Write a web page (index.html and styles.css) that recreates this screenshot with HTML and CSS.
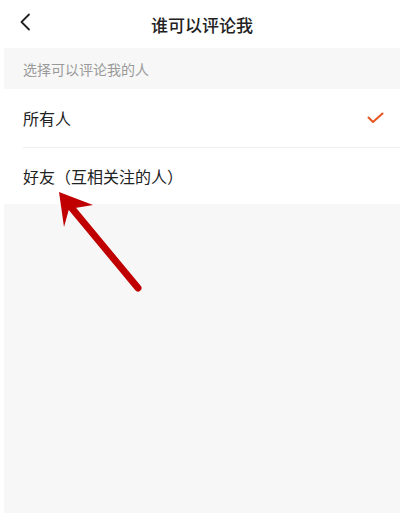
FILE: index.html
```html
<!DOCTYPE html>
<html lang="zh-CN">
<head>
<meta charset="utf-8">
<link rel="stylesheet" href="styles.css">
</head>
<body>
<div class="page">
  <header class="topbar">
    <svg class="back" width="12" height="18" viewBox="0 0 12 18"><path d="M10 1.5 L2.5 9 L10 16.5" fill="none" stroke="#222" stroke-width="1.8" stroke-linecap="round" stroke-linejoin="round"/></svg>
    <h1 class="title">谁可以评论我</h1>
  </header>
  <div class="section-label">选择可以评论我的人</div>
  <ul class="options">
    <li class="option option-first">
      <span>所有人</span>
      <svg class="check" width="17" height="12" viewBox="0 0 17 12"><path d="M1.5 5.5 L6 10 L15.5 1.5" fill="none" stroke="#e8541e" stroke-width="2" stroke-linecap="round" stroke-linejoin="round"/></svg>
    </li>
    <li class="option option-second"><span>好友（互相关注的人）</span></li>
  </ul>
  <div class="filler"></div>
</div>
<svg class="arrow" width="403" height="514" viewBox="0 0 403 514">
  <line x1="138" y1="288" x2="70" y2="206" stroke="#c00000" stroke-width="7" stroke-linecap="round"/>
  <polygon points="59,192 93,205 69,209 64,227" fill="#c00000"/>
</svg>
</body>
</html>
```
FILE: styles.css
```css
html, body {
  margin: 0;
  padding: 0;
  background: #fff;
}
body {
  font-family: "Noto Sans CJK SC", "Noto Sans", sans-serif;
  color: #222;
  width: 403px;
  height: 514px;
  overflow: hidden;
  position: relative;
}
.page {
  display: flex;
  flex-direction: column;
  height: 513px;
  padding: 0 3px 0 4px;
}
.topbar {
  height: 48px;
  display: flex;
  align-items: center;
  justify-content: center;
  position: relative;
}
.back {
  position: absolute;
  left: 15px;
  top: 13px;
}
.title {
  margin: 0;
  font-size: 17px;
  font-weight: 500;
  color: #222;
  letter-spacing: 0;
}
.section-label {
  height: 41px;
  background: #f7f7f7;
  display: flex;
  align-items: center;
  padding-left: 19px;
  font-size: 14px;
  color: #9a9a9a;
}
.options {
  list-style: none;
  margin: 0;
  padding: 0 0 0 19px;
  background: #fff;
}
.option {
  display: flex;
  align-items: center;
  justify-content: space-between;
  font-size: 16px;
  color: #222;
  padding-right: 16px;
}
.option-first {
  height: 58px;
  border-bottom: 1px solid #efefef;
}
.option-second {
  height: 56px;
}
.filler {
  flex: 1;
  background: #f7f7f7;
}
.arrow {
  position: absolute;
  left: 0;
  top: 0;
  pointer-events: none;
}
```
